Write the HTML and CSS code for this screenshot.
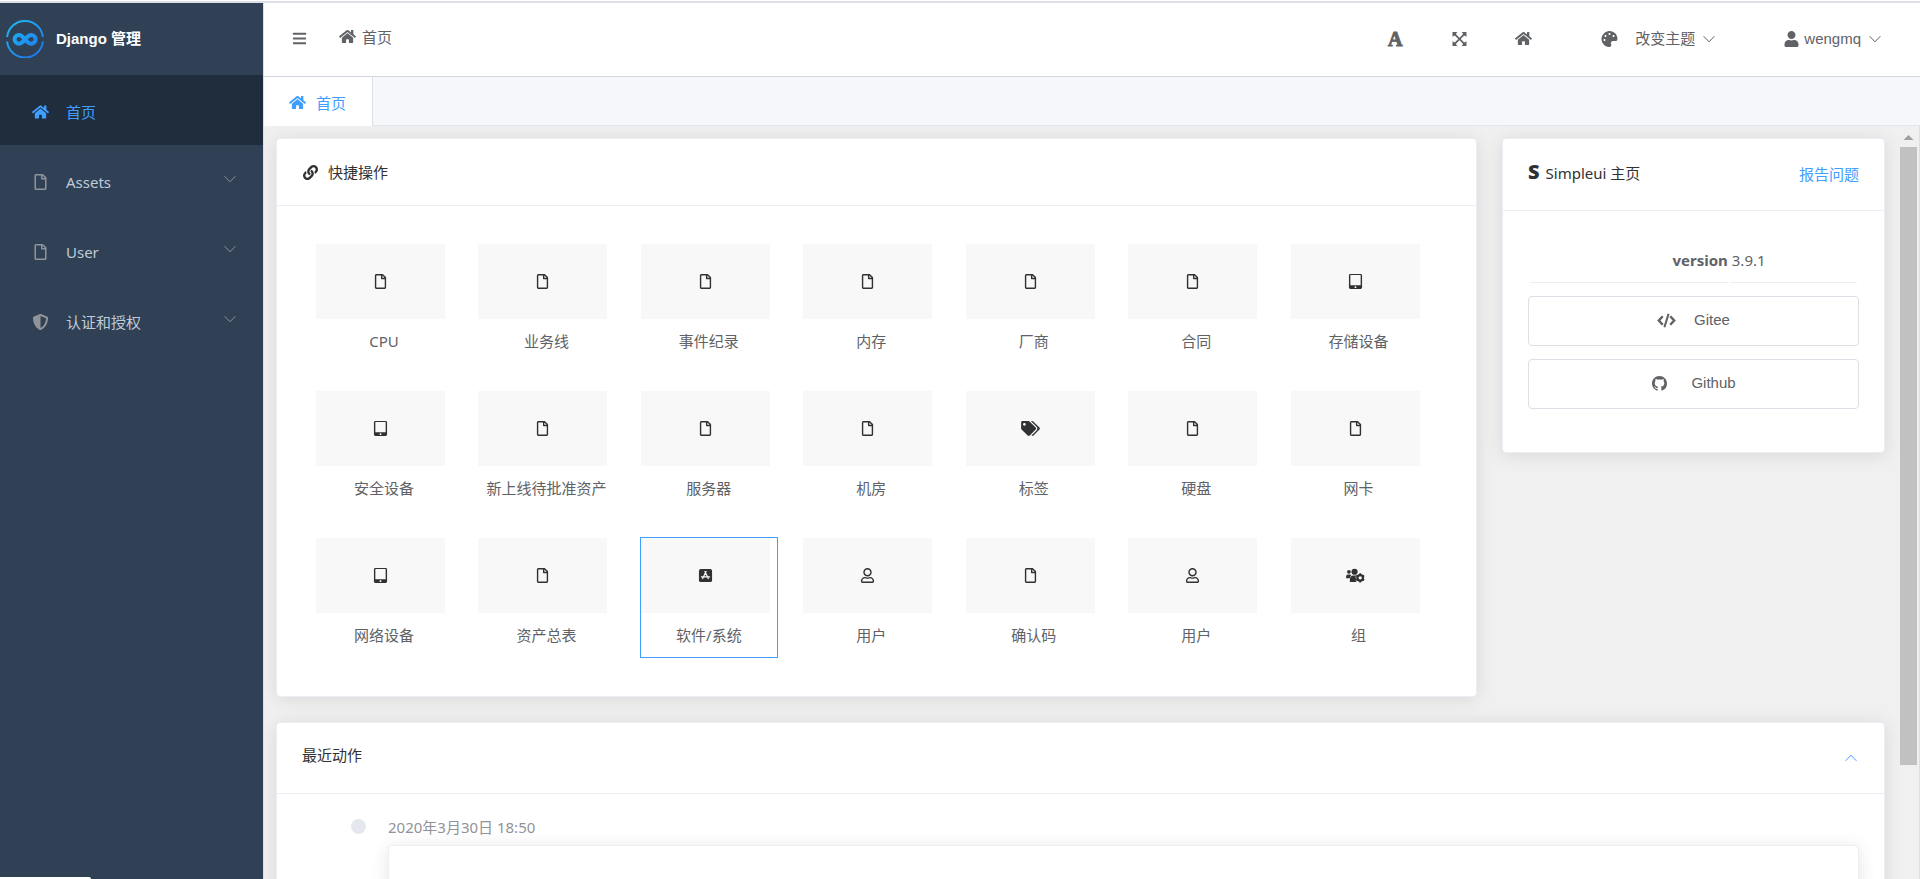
FILE: index.html
```html
<!DOCTYPE html>
<html lang="zh-CN">
<head>
<meta charset="utf-8">
<title>Django 管理</title>
<link rel="stylesheet" href="styles.css">
</head>
<body>
<svg class="sprite" aria-hidden="true">
  <symbol id="home" viewBox="0 0 576 512"><path d="M280.37 148.26L96 300.11V464a16 16 0 0 0 16 16l112.06-.29a16 16 0 0 0 15.92-16V368a16 16 0 0 1 16-16h64a16 16 0 0 1 16 16v95.64a16 16 0 0 0 16 16.05L464 480a16 16 0 0 0 16-16V300L295.67 148.26a12.19 12.19 0 0 0-15.3 0zM571.6 251.47L488 182.56V44.05a12 12 0 0 0-12-12h-56a12 12 0 0 0-12 12v72.61L318.47 43a48 48 0 0 0-61 0L4.34 251.47a12 12 0 0 0-1.6 16.9l25.5 31A12 12 0 0 0 45.15 301l235.22-193.74a12.19 12.19 0 0 1 15.3 0L530.9 301a12 12 0 0 0 16.9-1.6l25.5-31a12 12 0 0 0-1.7-16.93z"/></symbol>
  <symbol id="bars" viewBox="0 0 448 512"><rect y="60" width="448" height="72" rx="16"/><rect y="220" width="448" height="72" rx="16"/><rect y="380" width="448" height="72" rx="16"/></symbol>
  <symbol id="file" viewBox="0 0 384 512"><path d="M369.9 97.9L286 14C277 5 264.8-.1 252.1-.1H48C21.5 0 0 21.5 0 48v416c0 26.5 21.5 48 48 48h288c26.5 0 48-21.5 48-48V131.9c0-12.7-5.1-25-14.1-34zM332.1 128H256V51.9l76.1 76.1zM48 464V48h160v104c0 13.3 10.7 24 24 24h104v288H48z"/></symbol>
  <symbol id="shield" viewBox="0 0 512 512"><path d="M466.5 83.7l-192-80a48.15 48.15 0 0 0-36.9 0l-192 80C27.7 91.1 16 108.6 16 128c0 198.5 114.5 335.7 221.5 380.3 11.8 4.9 25.1 4.9 36.9 0C360.1 472.6 496 349.3 496 128c0-19.4-11.7-36.9-29.5-44.3zM256.1 446.3l-.1-381 175.9 73.3c-3.3 151.4-82.1 261.1-175.8 307.7z"/></symbol>
  <symbol id="link" viewBox="0 0 512 512"><path d="M326.612 185.391c59.747 59.809 58.927 155.698.36 214.59-.11.12-.24.25-.36.37l-67.2 67.2c-59.27 59.27-155.699 59.262-214.96 0-59.27-59.26-59.27-155.7 0-214.96l37.106-37.106c9.84-9.84 26.786-3.3 27.294 10.606.648 17.722 3.826 35.527 9.69 52.721 1.986 5.822.567 12.262-3.783 16.612l-13.087 13.087c-28.026 28.026-28.905 73.66-1.155 101.96 28.024 28.579 74.086 28.749 102.325.51l67.2-67.19c28.191-28.191 28.073-73.757 0-101.83-3.701-3.694-7.429-6.564-10.341-8.569a16.037 16.037 0 0 1-6.947-12.606c-.396-10.567 3.348-21.456 11.698-29.806l21.054-21.055c5.521-5.521 14.182-6.199 20.584-1.731a152.482 152.482 0 0 1 20.522 17.197zM467.547 44.449c-59.261-59.262-155.69-59.27-214.96 0l-67.2 67.2c-.12.12-.25.25-.36.37-58.566 58.892-59.387 154.781.36 214.59a152.454 152.454 0 0 0 20.521 17.196c6.402 4.468 15.064 3.789 20.584-1.731l21.054-21.055c8.35-8.35 12.094-19.239 11.698-29.806a16.037 16.037 0 0 0-6.947-12.606c-2.912-2.005-6.64-4.875-10.341-8.569-28.073-28.073-28.191-73.639 0-101.83l67.2-67.19c28.239-28.239 74.3-28.069 102.325.51 27.75 28.3 26.872 73.934-1.155 101.96l-13.087 13.087c-4.35 4.35-5.769 10.79-3.783 16.612 5.864 17.194 9.042 34.999 9.69 52.721.509 13.906 17.454 20.446 27.294 10.606l37.106-37.106c59.271-59.259 59.271-155.699.001-214.959z"/></symbol>
  <symbol id="expand" viewBox="0 0 14 14"><path d="M0 0h5L3.700 1.300v1.200L7 5.800l3.300-3.300V1.300L9 0h5v5l-1.300-1.300h-1.200L8.200 7l3.300 3.300h1.200L14 9v5H9l1.300-1.300v-1.200L7 8.200l-3.300 3.300v1.200L5 14H0V9l1.300 1.300h1.200L5.800 7 2.500 3.700H1.300L0 5z"/></symbol>
  <symbol id="palette" viewBox="0 0 512 512"><path d="M204.3 5C104.900 24.400 24.800 104.300 5.200 203.400c-37 187 131.700 326.400 258.800 306.700 41.200-6.400 61.400-54.600 42.500-91.700-23.100-45.400 9.900-98.400 60.900-98.400h79.700c35.800 0 64.800-29.600 64.900-65.300C511.500 97.100 368.100-26.900 204.300 5zM96 320c-17.700 0-32-14.300-32-32s14.300-32 32-32 32 14.300 32 32-14.300 32-32 32zm32-128c-17.700 0-32-14.300-32-32s14.300-32 32-32 32 14.300 32 32-14.300 32-32 32zm128-64c-17.700 0-32-14.300-32-32s14.300-32 32-32 32 14.300 32 32-14.300 32-32 32zm128 64c-17.700 0-32-14.300-32-32s14.300-32 32-32 32 14.300 32 32-14.300 32-32 32z"/></symbol>
  <symbol id="user-solid" viewBox="0 0 448 512"><path d="M224 256c70.700 0 128-57.300 128-128S294.700 0 224 0 96 57.300 96 128s57.300 128 128 128zm89.600 32h-16.700c-22.200 10.200-46.900 16-72.900 16s-50.600-5.800-72.900-16h-16.700C60.200 288 0 348.200 0 422.400V464c0 26.500 21.500 48 48 48h352c26.500 0 48-21.500 48-48v-41.600c0-74.200-60.200-134.400-134.400-134.400z"/></symbol>
  <symbol id="user" viewBox="0 0 448 512"><path d="M313.6 304c-28.700 0-42.500 16-89.600 16-47.100 0-60.800-16-89.600-16C60.200 304 0 364.200 0 438.400V464c0 26.500 21.500 48 48 48h352c26.500 0 48-21.500 48-48v-25.600c0-74.200-60.200-134.400-134.400-134.400zM400 464H48v-25.600c0-47.600 38.800-86.400 86.400-86.400 14.600 0 38.300 16 89.600 16 51.700 0 74.900-16 89.600-16 47.600 0 86.400 38.800 86.400 86.400V464zM224 288c79.500 0 144-64.500 144-144S303.500 0 224 0 80 64.500 80 144s64.500 144 144 144zm0-240c52.900 0 96 43.100 96 96s-43.100 96-96 96-96-43.100-96-96 43.100-96 96-96z"/></symbol>
  <symbol id="tablet" viewBox="0 0 448 512"><path fill-rule="evenodd" d="M400 0H48C21.500 0 0 21.500 0 48v416c0 26.500 21.500 48 48 48h352c26.500 0 48-21.500 48-48V48c0-26.500-21.500-48-48-48zM224 480c-17.700 0-32-14.300-32-32s14.300-32 32-32 32 14.300 32 32-14.300 32-32 32zM400 372c0 6.600-5.400 12-12 12H60c-6.600 0-12-5.400-12-12V48c0-6.600 5.400-12 12-12h328c6.600 0 12 5.400 12 12z"/></symbol>
  <symbol id="tags" viewBox="0 0 640 512"><path d="M497.941 225.941L286.059 14.059A48 48 0 0 0 252.118 0H48C21.490 0 0 21.490 0 48v204.118a48 48 0 0 0 14.059 33.941l211.882 211.882c18.744 18.745 49.136 18.746 67.882 0l204.118-204.118c18.745-18.745 18.745-49.137 0-67.882zM112 160c-26.510 0-48-21.490-48-48s21.490-48 48-48 48 21.490 48 48-21.490 48-48 48zm513.941 133.823L421.823 497.941c-18.745 18.745-49.137 18.745-67.882 0l-.36-.36L527.640 323.522c16.999-16.999 26.360-39.600 26.360-63.640s-9.362-46.641-26.360-63.640L331.397 0h48.721a48 48 0 0 1 33.941 14.059l211.882 211.882c18.745 18.745 18.745 49.137 0 67.882z"/></symbol>
  <symbol id="app" viewBox="0 0 14 16"><rect y="1" width="14" height="14" rx="2"/><path d="M7.600 3.800L4 11.200M6.400 3.800L10 11.200M2.600 9.400h8.800" fill="none" stroke="#f8f8f8" stroke-width="1.300" stroke-linecap="round"/></symbol>
  <symbol id="group" viewBox="0 0 20 16"><circle cx="3" cy="4" r="2"/><circle cx="9" cy="4" r="3.300"/><path d="M0 11V9q0-2 2-2h2q1 0 1.500.6Q4 9 3.800 11zM4 15v-2.500Q4 8 8 8h2.500L10 10l1 2-1 1.500 1.500 1.500z"/><circle cx="15" cy="10.500" r="3" fill="none" stroke="currentColor" stroke-width="2.400"/><path d="M15 5.600v2M15 13.400v2M10.800 8l1.700 1M17.500 12l1.700 1M10.800 13l1.700-1M17.500 9l1.700-1" stroke="currentColor" stroke-width="2"/></symbol>
  <symbol id="code" viewBox="0 0 20 16"><path d="M6 3.500L1.800 8 6 12.500M14 3.500L18.200 8 14 12.500" fill="none" stroke="currentColor" stroke-width="2.600"/><path d="M12.200 0.800L7.800 15.200" stroke="currentColor" stroke-width="2.200"/></symbol>
  <symbol id="github" viewBox="0 0 16 16"><path d="M8 0C3.580 0 0 3.580 0 8c0 3.540 2.290 6.530 5.470 7.590.4.070.55-.17.55-.38 0-.19-.01-.82-.01-1.490-2.010.37-2.530-.49-2.690-.94-.09-.23-.48-.94-.82-1.130-.28-.15-.68-.52-.01-.53.63-.01 1.080.58 1.230.82.72 1.210 1.870.87 2.330.66.07-.52.28-.87.51-1.070-1.780-.2-3.640-.89-3.640-3.950 0-.87.31-1.590.82-2.150-.08-.2-.36-1.020.08-2.120 0 0 .67-.21 2.200.82.64-.18 1.320-.27 2-.27s1.360.09 2 .27c1.530-1.040 2.200-.82 2.200-.82.44 1.100.16 1.920.08 2.120.51.56.82 1.270.82 2.150 0 3.070-1.870 3.750-3.650 3.950.29.25.54.73.54 1.480 0 1.070-.01 1.930-.01 2.200 0 .21.15.46.55.38A8.010 8.010 0 0 0 16 8c0-4.420-3.580-8-8-8z"/></symbol>
  <symbol id="down" viewBox="0 0 12 12"><path d="M0.600 3.200L6 8.800l5.400-5.600" fill="none" stroke="currentColor"/></symbol>
  <symbol id="up" viewBox="0 0 12 12"><path d="M0.600 8.800L6 3.200l5.400 5.600" fill="none" stroke="currentColor"/></symbol>
</svg>

<div class="app">
  <aside class="sidebar">
    <div class="brand">
      <svg class="brand-logo" viewBox="0 0 38 38" fill="none" aria-hidden="true">
        <defs><linearGradient id="blue" gradientUnits="userSpaceOnUse" x1="4" y1="4" x2="34" y2="34"><stop offset="0" stop-color="#1fb6f0"/><stop offset="1" stop-color="#1f78f0"/></linearGradient></defs>
        <path d="M1.100 17A18 18 0 0 1 36.900 17M1.100 21.500A18 18 0 0 0 36.900 21.500" stroke="url(#blue)" stroke-width="2"/>
        <path d="M19 19.500c-2.500-3.300-4-4.600-6-4.600a4.400 4.400 0 0 0 0 8.800c2.500 0 4-2 6-4.200s3.500-4.600 6.200-4.600a4.400 4.400 0 0 1 0 8.800c-2.600 0-4.200-1.900-6.200-4.200z" stroke="url(#blue)" stroke-width="4"/>
      </svg>
      <span>Django 管理</span>
    </div>
    <nav class="menu">
      <a class="menu-item active" href="#"><svg class="icon"><use href="#home"/></svg><span>首页</span></a>
      <button class="menu-item" type="button"><svg class="icon"><use href="#file"/></svg><span>Assets</span><svg class="chevron"><use href="#down"/></svg></button>
      <button class="menu-item" type="button"><svg class="icon"><use href="#file"/></svg><span>User</span><svg class="chevron"><use href="#down"/></svg></button>
      <button class="menu-item" type="button"><svg class="icon"><use href="#shield"/></svg><span>认证和授权</span><svg class="chevron"><use href="#down"/></svg></button>
    </nav>
    <div class="status"></div>
  </aside>

  <main class="main">
    <header class="topbar">
      <button class="tool" type="button" aria-label="折叠菜单"><svg class="icon"><use href="#bars"/></svg></button>
      <a class="crumb" href="#"><svg class="icon"><use href="#home"/></svg><span>首页</span></a>
      <div class="tools">
        <button class="tool letter" type="button" aria-label="字体">A</button>
        <button class="tool" type="button" aria-label="全屏"><svg class="icon small"><use href="#expand"/></svg></button>
        <a class="tool" href="#" aria-label="首页"><svg class="icon"><use href="#home"/></svg></a>
      </div>
      <button class="dropdown" type="button"><svg class="icon"><use href="#palette"/></svg><span class="theme-name">改变主题</span><svg class="chevron"><use href="#down"/></svg></button>
      <button class="dropdown" type="button"><svg class="icon"><use href="#user-solid"/></svg><span class="user-name">wengmq</span><svg class="chevron"><use href="#down"/></svg></button>
    </header>

    <div class="tabs"><a class="tab" href="#"><svg class="icon"><use href="#home"/></svg><span>首页</span></a></div>

    <div class="viewport">
      <div class="content">
        <div class="columns">
          <section class="card">
            <h2 class="card-head quick-head"><svg class="icon"><use href="#link"/></svg><span>快捷操作</span></h2>
            <div class="tiles">
              <a class="tile" href="#"><span class="pic"><svg class="icon"><use href="#file"/></svg></span><span class="name">CPU</span></a>
              <a class="tile" href="#"><span class="pic"><svg class="icon"><use href="#file"/></svg></span><span class="name">业务线</span></a>
              <a class="tile" href="#"><span class="pic"><svg class="icon"><use href="#file"/></svg></span><span class="name">事件纪录</span></a>
              <a class="tile" href="#"><span class="pic"><svg class="icon"><use href="#file"/></svg></span><span class="name">内存</span></a>
              <a class="tile" href="#"><span class="pic"><svg class="icon"><use href="#file"/></svg></span><span class="name">厂商</span></a>
              <a class="tile" href="#"><span class="pic"><svg class="icon"><use href="#file"/></svg></span><span class="name">合同</span></a>
              <a class="tile" href="#"><span class="pic"><svg class="icon"><use href="#tablet"/></svg></span><span class="name">存储设备</span></a>
              <a class="tile" href="#"><span class="pic"><svg class="icon"><use href="#tablet"/></svg></span><span class="name">安全设备</span></a>
              <a class="tile" href="#"><span class="pic"><svg class="icon"><use href="#file"/></svg></span><span class="name">新上线待批准资产</span></a>
              <a class="tile" href="#"><span class="pic"><svg class="icon"><use href="#file"/></svg></span><span class="name">服务器</span></a>
              <a class="tile" href="#"><span class="pic"><svg class="icon"><use href="#file"/></svg></span><span class="name">机房</span></a>
              <a class="tile" href="#"><span class="pic"><svg class="icon wide"><use href="#tags"/></svg></span><span class="name">标签</span></a>
              <a class="tile" href="#"><span class="pic"><svg class="icon"><use href="#file"/></svg></span><span class="name">硬盘</span></a>
              <a class="tile" href="#"><span class="pic"><svg class="icon"><use href="#file"/></svg></span><span class="name">网卡</span></a>
              <a class="tile" href="#"><span class="pic"><svg class="icon"><use href="#tablet"/></svg></span><span class="name">网络设备</span></a>
              <a class="tile" href="#"><span class="pic"><svg class="icon"><use href="#file"/></svg></span><span class="name">资产总表</span></a>
              <a class="tile selected" href="#"><span class="pic"><svg class="icon"><use href="#app"/></svg></span><span class="name">软件/系统</span></a>
              <a class="tile" href="#"><span class="pic"><svg class="icon"><use href="#user"/></svg></span><span class="name">用户</span></a>
              <a class="tile" href="#"><span class="pic"><svg class="icon"><use href="#file"/></svg></span><span class="name">确认码</span></a>
              <a class="tile" href="#"><span class="pic"><svg class="icon"><use href="#user"/></svg></span><span class="name">用户</span></a>
              <a class="tile" href="#"><span class="pic"><svg class="icon wide"><use href="#group"/></svg></span><span class="name">组</span></a>
            </div>
          </section>

          <section class="card info">
            <div class="card-head info-head"><b class="mark">S</b><h2>Simpleui 主页</h2><a class="report" href="#">报告问题</a></div>
            <div class="info-body">
              <p class="version"><strong>version</strong><span>3.9.1</span></p>
              <button class="repo" type="button"><svg class="icon wide"><use href="#code"/></svg><span>Gitee</span></button>
              <button class="repo github" type="button"><svg class="icon"><use href="#github"/></svg><span>Github</span></button>
            </div>
          </section>
        </div>

        <section class="card recent">
          <div class="card-head recent-head"><h2>最近动作</h2><button class="fold" type="button" aria-label="收起"><svg class="chevron"><use href="#up"/></svg></button></div>
          <div class="timeline">
            <span class="dot"></span>
            <div class="event"><time>2020年3月30日 18:50</time><div class="card event-card"></div></div>
          </div>
        </section>
      </div>
      <div class="scrollbar"><span class="arrow"></span><span class="thumb"></span></div>
    </div>
  </main>
</div>
</body>
</html>
```
FILE: styles.css
```css
* { box-sizing: border-box; }

body {
  display: flex;
  flex-direction: column;
  height: 100vh;
  margin: 0;
  padding-top: 1px;
  overflow: hidden;
  font: 15px/20px "Noto Sans", "Noto Sans CJK SC", sans-serif;
  color: #606266;
  background: #fff;
}

a { color: inherit; text-decoration: none; }
h2, p { margin: 0; font-size: 15px; font-weight: 400; }
button { padding: 0; border: 0; background: none; color: inherit; font: inherit; cursor: pointer; }

.sprite { display: none; }
.icon { flex: none; width: 17px; height: 15px; fill: currentColor; }
.icon.small { height: 14px; }
.icon.wide { width: 19px; height: 15px; }
.chevron { flex: none; width: 12px; height: 12px; }

.app {
  display: flex;
  flex: 1;
  min-height: 0;
  overflow: hidden;
  border-top: 2px solid #dcdfe6;
}

/* Sidebar */
.sidebar { display: flex; flex-direction: column; flex: none; width: 263px; background: #304156; }
.brand {
  display: flex;
  align-items: center;
  gap: 12px;
  height: 72px;
  padding: 0 0 1px 6px;
  color: #fff;
  font-family: "Liberation Sans", "Noto Sans CJK SC", sans-serif;
  font-weight: 700;
}
.brand-logo { width: 38px; height: 38px; }
.menu { display: flex; flex-direction: column; flex: 1; }
.menu-item {
  display: flex;
  align-items: center;
  gap: 17px;
  height: 70px;
  padding: 4px 27px 0 32px;
  color: #bfcbd9;
  text-align: left;
}
.menu-item .chevron { margin: 0 0 6px auto; color: #909399; }
.menu-item .icon { height: 16px; color: #909399; }
.menu-item.active { background: #1f2d3d; color: #409eff; }
.menu-item.active .icon { color: #409eff; }
.status { width: 91px; height: 2px; background: #fff; border-top-right-radius: 2px; }

/* Header */
.main { display: flex; flex-direction: column; flex: 1; min-width: 0; border-left: 1px solid #dcdfe6; }
.topbar {
  display: flex;
  flex: none;
  align-items: center;
  height: 74px;
  padding: 0 39px 2px 25px;
  border-bottom: 1px solid #d3d6df;
}
.tool { display: flex; justify-content: center; width: 20px; }
.letter { font: 700 20px/20px "Liberation Serif", serif; -webkit-text-stroke: 1px currentColor; }
.crumb { display: flex; align-items: center; gap: 6px; margin: 0 auto 4px 30px; }
.tools { display: flex; align-items: center; gap: 44px; }
.dropdown { display: flex; align-items: center; margin-left: 68px; font-family: "Liberation Sans", "Noto Sans CJK SC", sans-serif; }
.dropdown .icon { height: 16px; }
.dropdown .chevron { margin-left: 8px; }
.theme-name { margin-left: 17px; }
.user-name { margin-left: 4px; }

.tabs { display: flex; flex: none; height: 49px; background: #f5f7fa; border-bottom: 1px solid #e4e7ed; }
.tab {
  display: flex;
  align-items: center;
  gap: 10px;
  height: 49px;
  padding: 2px 26px 0 25px;
  border-right: 1px solid #dcdfe6;
  background: #fff;
  color: #409eff;
}

/* Content */
.viewport { display: flex; flex: 1; min-height: 0; overflow: hidden; background: #f0f0f0; }
.content { flex: 1; min-width: 0; padding: 12px 15px 0 12px; }
.columns { display: grid; grid-template-columns: minmax(0, 1fr) 383px; gap: 25px; align-items: start; }
.card {
  border: 1px solid #ebeef5;
  border-radius: 4px;
  background: #fff;
  box-shadow: 0 2px 18px rgba(0, 0, 0, 0.1);
}
.card-head { display: flex; align-items: center; padding: 0 25px; border-bottom: 1px solid #ebeef5; color: #303133; }
.quick-head { height: 67px; gap: 9px; }

.tiles {
  display: grid;
  grid-template-columns: repeat(7, minmax(0, 1fr));
  row-gap: 26px;
  padding: 37px 24px 38px 38px;
}
.tile { width: 138px; max-width: 100%; height: 121px; border: 1px solid transparent; }
.tile.selected { border-color: #409eff; }
.pic { display: flex; align-items: center; justify-content: center; height: 75px; margin-right: 7px; background: #f8f8f8; color: #303133; }
.name { display: block; padding-top: 12px; text-align: center; white-space: nowrap; }

.info-head { height: 72px; padding-bottom: 1px; }
.mark { font: 800 20px/20px "Open Sans", sans-serif; margin: 0 6px 4px 0; }
.info-head h2 { margin-bottom: 3px; }
.report { margin-left: auto; color: #409eff; }
.info-body { display: flex; flex-direction: column; gap: 13px; padding: 39px 25px 43px; }
.version { display: grid; grid-template-columns: 199fr 128fr; gap: 2px; padding: 0 2px; }
.version > * { padding-bottom: 12px; border-bottom: 1px solid #ebeef5; }
.version strong { text-align: right; }
.version span { padding-left: 2px; }
.repo {
  display: flex;
  align-items: center;
  justify-content: center;
  gap: 18px;
  height: 50px;
  padding-bottom: 2px;
  border: 1px solid #dcdfe6;
  border-radius: 4px;
  font-family: "Liberation Sans", sans-serif;
}
.repo.github { gap: 23px; }

.recent { margin-top: 25px; }
.recent-head { height: 71px; }
.recent-head h2 { margin-bottom: 6px; }
.fold { display: flex; margin: 0 2px 0 auto; color: #409eff; }
.timeline { display: flex; gap: 22px; padding: 23px 25px 0 74px; }
.dot { flex: none; width: 15px; height: 15px; margin-top: 2px; border-radius: 50%; background: #e4e7ed; }
.event { flex: 1; color: #909399; }
.event time { display: block; margin-bottom: 8px; }
.event-card { height: 90px; }

/* Scrollbar */
.scrollbar { display: flex; flex-direction: column; align-items: center; flex: none; width: 20px; padding: 9px 2px 0 0; border-right: 1px solid #dcdfe6; }
.arrow { width: 10px; height: 5px; margin-bottom: 7px; background: #a0a0a0; clip-path: polygon(50% 0, 100% 100%, 0 100%); }
.thumb { width: 17px; height: 83%; background: #c1c1c1; }
```
